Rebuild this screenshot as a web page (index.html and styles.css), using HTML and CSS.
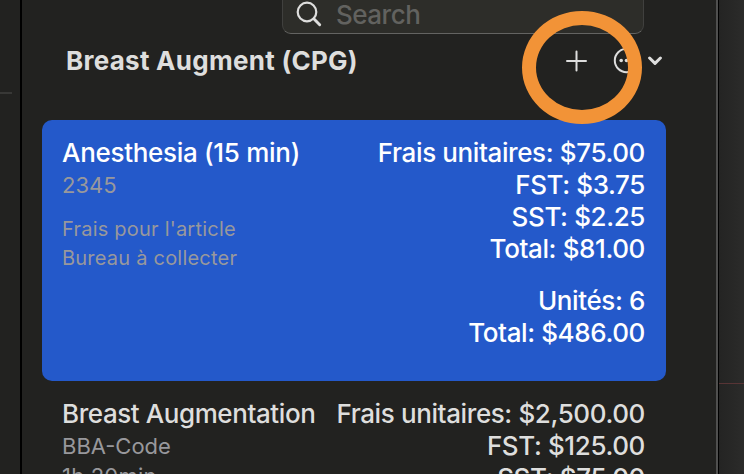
FILE: index.html
```html
<!DOCTYPE html>
<html lang="fr">
<head>
  <meta charset="UTF-8">
  <meta name="viewport" content="width=device-width, initial-scale=1.0">
  <title>Breast Augment (CPG)</title>
  <link rel="stylesheet" href="styles.css">
</head>
<body>
  <aside class="left-pane">
    <div class="divider"></div>
  </aside>

  <main class="panel">
    <div class="search">
      <svg class="search-icon" width="28" height="28" viewBox="0 0 28 28">
        <circle cx="11" cy="11" r="9.3"/>
        <path d="M17.8 17.8L23.7 23.7" stroke-width="2.9"/>
      </svg>
      <span class="placeholder">Search</span>
    </div>

    <header class="toolbar">
      <h1 class="title">Breast Augment (CPG)</h1>
      <svg class="icon plus" width="22" height="22" viewBox="0 0 22 22">
        <path d="M11.5 1.6V20.4M2 11H21"/>
      </svg>
      <svg class="icon more" width="26" height="26" viewBox="0 0 26 26">
        <circle cx="13.5" cy="12.5" r="11.7"/>
        <g class="dots">
          <circle cx="8.2" cy="12.5" r="1.8"/>
          <circle cx="13.5" cy="12.5" r="1.8"/>
          <circle cx="18.8" cy="12.5" r="1.8"/>
        </g>
      </svg>
      <svg class="icon chevron" width="14" height="10" viewBox="0 0 14 10">
        <path d="M1.6 2L7 7.4L12.4 2"/>
      </svg>
      <div class="highlight"></div>
    </header>

    <section class="item selected">
      <div class="details">
        <h2 class="name">Anesthesia (15 min)</h2>
        <p class="code">2345</p>
        <p class="note first">Frais pour l'article</p>
        <p class="note">Bureau à collecter</p>
      </div>
      <div class="prices">
        <p>Frais unitaires: $75.00</p>
        <p>FST: $3.75</p>
        <p>SST: $2.25</p>
        <p>Total: $81.00</p>
        <p class="units">Unités: 6</p>
        <p>Total: $486.00</p>
      </div>
    </section>

    <section class="item">
      <div class="details">
        <h2 class="name long">Breast Augmentation</h2>
        <p class="code">BBA-Code</p>
        <p class="code duration">1h 20min</p>
      </div>
      <div class="prices">
        <p>Frais unitaires: $2,500.00</p>
        <p>FST: $125.00</p>
        <p>SST: $75.00</p>
      </div>
    </section>
  </main>

  <aside class="right-pane">
    <div class="rule"></div>
  </aside>
</body>
</html>
```

FILE: styles.css
```css
:root {
  --bg: #222220;
  --text: #dededd;
  --muted: #98989c;
  --blue: #2459ca;
  --orange: #f29337;
}

* {
  box-sizing: border-box;
}

body {
  margin: 0;
  display: flex;
  height: 474px;
  overflow: hidden;
  background: var(--bg);
  color: var(--text);
  font-family: Inter, sans-serif;
}

h1, h2, p {
  margin: 0;
  white-space: nowrap;
}

.left-pane {
  width: 22px;
  border-right: 2px solid #000;
  padding-top: 92px;
}

.divider {
  width: 12px;
  height: 2px;
  background: #383836;
}

.panel {
  width: 696px;
  border-right: 2px solid #50504f;
  overflow: hidden;
}

.right-pane {
  width: 26px;
  border-left: 1px solid #000;
  background: linear-gradient(90deg, #242423, #2b2b2a);
  padding-top: 383px;
}

.rule {
  height: 1px;
  background: #573435;
}

/* Search field */
.search {
  display: flex;
  width: 362px;
  height: 34px;
  margin-left: 260px;
  padding-left: 13px;
  background: #2d2d29;
  border: 1px solid #40403e;
  border-top: none;
  border-bottom-color: #646462;
  border-radius: 0 0 9px 9px;
}

.search-icon {
  margin-top: 1px;
  fill: none;
  stroke: #dededd;
  stroke-width: 2.2;
  stroke-linecap: round;
}

.placeholder {
  margin-left: 12px;
  font-size: 26px;
  font-weight: 450;
  line-height: 30px;
  letter-spacing: -0.5px;
  color: #62625f;
}

/* Toolbar */
.toolbar {
  position: relative;
  display: flex;
  align-items: center;
  height: 54px;
  margin-bottom: 32px;
  padding-left: 44px;
}

.title {
  width: 499px;
  font-size: 26px;
  font-weight: 700;
  line-height: 32px;
  letter-spacing: 0.27px;
}

.icon {
  flex: none;
  fill: none;
  stroke: var(--text);
  stroke-width: 2;
  stroke-linecap: round;
  stroke-linejoin: round;
}

.more {
  margin-left: 26px;
}

.dots {
  fill: var(--text);
  stroke: none;
}

.chevron {
  margin-left: 9px;
  stroke-width: 3;
}

.highlight {
  position: absolute;
  left: 500px;
  top: -23px;
  width: 120px;
  height: 113px;
  border: 14px solid var(--orange);
  border-radius: 50%;
}

/* Items */
.item {
  display: flex;
  justify-content: space-between;
  width: 624px;
  height: 261px;
  margin-left: 20px;
  padding: 17px 21px 0 20px;
}

.selected {
  background: var(--blue);
  border-radius: 10px;
  color: #fff;
}

.name {
  font-size: 26px;
  font-weight: 450;
  line-height: 32px;
  letter-spacing: -0.3px;
}

.long {
  letter-spacing: -0.42px;
}

.code {
  font-size: 22px;
  line-height: 32px;
  color: var(--muted);
}

.note {
  font-size: 20px;
  line-height: 29px;
  letter-spacing: 0.22px;
  color: var(--muted);
}

.first {
  margin-top: 14px;
}

.duration {
  line-height: 29px;
  letter-spacing: 0.2px;
}

.prices {
  font-size: 26px;
  font-weight: 450;
  line-height: 32px;
  letter-spacing: -0.39px;
  text-align: right;
}

.units {
  margin-top: 20px;
}
```
